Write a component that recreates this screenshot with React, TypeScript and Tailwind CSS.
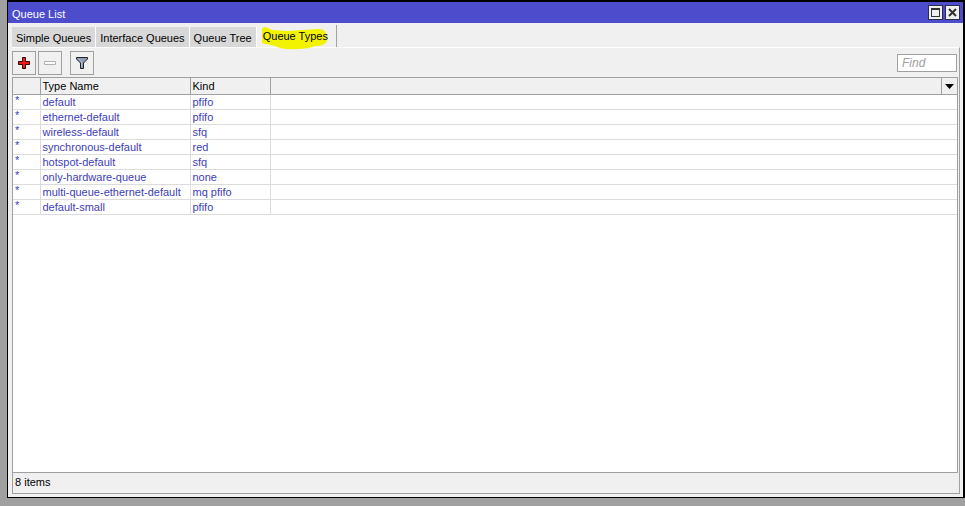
import { useState } from "react";

const tabs = ["Simple Queues", "Interface Queues", "Queue Tree", "Queue Types"];

const queueTypes = [
  { name: "default", kind: "pfifo" },
  { name: "ethernet-default", kind: "pfifo" },
  { name: "wireless-default", kind: "sfq" },
  { name: "synchronous-default", kind: "red" },
  { name: "hotspot-default", kind: "sfq" },
  { name: "only-hardware-queue", kind: "none" },
  { name: "multi-queue-ethernet-default", kind: "mq pfifo" },
  { name: "default-small", kind: "pfifo" },
];

const toolButton =
  "flex h-6 w-6 items-center justify-center border border-[#a0a0a0] bg-[#f0f0f0]";
const windowButton =
  "flex h-[15px] w-[15px] items-center justify-center border border-[#2c2c50] bg-[#f0f0f0]";

const TitleBar = () => (
  <header className="flex h-[21px] items-center bg-[#4c4ccc] pl-1 pr-[3px] text-white">
    <h1 className="pt-0.5">Queue List</h1>
    <div className="ml-auto flex gap-0.5">
      <button type="button" aria-label="Maximize" className={windowButton}>
        <svg width="9" height="9" viewBox="0 0 9 9" shapeRendering="crispEdges">
          <path d="M0 0h9v9H0zM1 2v6h7V2z" fill="#333" fillRule="evenodd" />
        </svg>
      </button>
      <button type="button" aria-label="Close" className={windowButton}>
        <svg width="9" height="9" viewBox="0 0 9 9">
          <path d="M1 1l7 7M8 1l-7 7" stroke="#333" strokeWidth="2" />
        </svg>
      </button>
    </div>
  </header>
);

const App = () => {
  const [active, setActive] = useState("Queue Types");
  const [find, setFind] = useState("");

  return (
    <div className="h-screen bg-[#a0a0a0] pb-2 pl-[7px] font-['Liberation_Sans',Arial,sans-serif] text-[11px] leading-[14px] text-black">
      <main className="flex h-full flex-col border-b border-l border-r-2 border-t-2 border-black bg-[#f0f0f0]">
        <TitleBar />
        <nav className="flex h-6 items-end pl-1" role="tablist">
          {tabs.map((tab) =>
            tab === active ? (
              <button
                key={tab}
                type="button"
                role="tab"
                aria-selected
                className="relative h-[22px] border-r border-[#a0a0a0] pl-1.5 pr-2"
              >
                <svg
                  className="absolute left-1 top-0.5"
                  width="68"
                  height="24"
                  viewBox="0 0 68 24"
                >
                  <path
                    d="M1 2Q1 0 5 0L11 3L26 4L58 2Q65 2 65 8L66 14Q64 19 54 19Q48 22 36 22Q22 23 14 19L5 17Q0 17 1 13Z"
                    fill="#f3f300"
                  />
                </svg>
                <span className="relative">{tab}</span>
              </button>
            ) : (
              <button
                key={tab}
                type="button"
                role="tab"
                aria-selected={false}
                onClick={() => setActive(tab)}
                className="h-5 border-r border-white bg-[#d8d8d8] px-1 pt-px"
              >
                {tab}
              </button>
            )
          )}
        </nav>
        <section className="mb-[3px] ml-1 mr-[3px] flex flex-1 flex-col border-b border-r border-t border-b-[#a0a0a0] border-r-[#a0a0a0] border-t-white">
          <div className="flex h-[29px] items-center gap-0.5 pr-0.5">
            <button type="button" aria-label="Add" className={toolButton}>
              <svg width="12" height="12" viewBox="0 0 12 12">
                <path
                  d="M4.5.5h3v4h4v3h-4v4h-3v-4h-4v-3h4z"
                  fill="#f01818"
                  stroke="#300"
                />
              </svg>
            </button>
            <button type="button" aria-label="Remove" className={toolButton}>
              <svg width="12" height="4" viewBox="0 0 12 4">
                <path d="M.5.5h11v3H.5z" fill="#fff" stroke="#b0b0b0" />
              </svg>
            </button>
            <button
              type="button"
              aria-label="Filter"
              className={`${toolButton} ml-1.5`}
            >
              <svg width="12" height="12" viewBox="0 0 12 12">
                <path
                  d="M.5.5h11v1.5L7.5 6v5.5h-3V6L.5 2z"
                  fill="#8c9cb4"
                  stroke="#222"
                />
                <path d="M3 2l2.5 3V10" fill="none" stroke="#b4c0d2" />
              </svg>
            </button>
            <input
              aria-label="Find"
              placeholder="Find"
              value={find}
              onChange={(e) => setFind(e.target.value)}
              className="ml-auto h-[18px] w-[60px] border border-[#a0a0a0] bg-white px-1 text-xs italic outline-none placeholder:text-[#a0a0a0]"
            />
          </div>
          <div className="mr-px flex flex-1 flex-col border-l border-t border-[#a0a0a0]">
            <div className="flex-1 border-b border-r border-[#a0a0a0] bg-white">
              <table className="w-full table-fixed border-collapse text-left">
                <colgroup>
                  <col className="w-[27px]" />
                  <col className="w-[150px]" />
                  <col className="w-20" />
                  <col />
                  <col className="w-4" />
                </colgroup>
                <thead>
                  <tr className="h-4 border-b border-[#a0a0a0] bg-[#f0f0f0]">
                    <th className="border-r border-[#a0a0a0] p-0" />
                    <th className="border-r border-[#a0a0a0] p-0 pl-0.5 pt-px font-normal">
                      Type Name
                    </th>
                    <th className="border-r border-[#a0a0a0] p-0 pl-0.5 pt-px font-normal">
                      Kind
                    </th>
                    <th className="border-r border-[#a0a0a0] p-0" />
                    <th className="p-0">
                      <button
                        type="button"
                        aria-label="Columns"
                        className="flex w-full justify-center pt-px"
                      >
                        <svg width="9" height="5" viewBox="0 0 9 5">
                          <path d="M0 0h9L4.5 5z" />
                        </svg>
                      </button>
                    </th>
                  </tr>
                </thead>
                <tbody className="text-[#4040b8]">
                  {queueTypes.map((q) => (
                    <tr key={q.name} className="h-[15px] border-b border-[#dcdcdc]">
                      <td className="border-r border-[#dcdcdc] p-0 pl-0.5 align-top leading-[11px]">
                        *
                      </td>
                      <td className="border-r border-[#dcdcdc] p-0 pl-0.5">
                        {q.name}
                      </td>
                      <td className="border-r border-[#dcdcdc] p-0 pl-0.5">
                        {q.kind}
                      </td>
                      <td className="p-0" colSpan={2} />
                    </tr>
                  ))}
                </tbody>
              </table>
            </div>
            <footer className="h-5 pl-0.5 pt-0.5">{queueTypes.length} items</footer>
          </div>
        </section>
      </main>
    </div>
  );
};

export default App;
